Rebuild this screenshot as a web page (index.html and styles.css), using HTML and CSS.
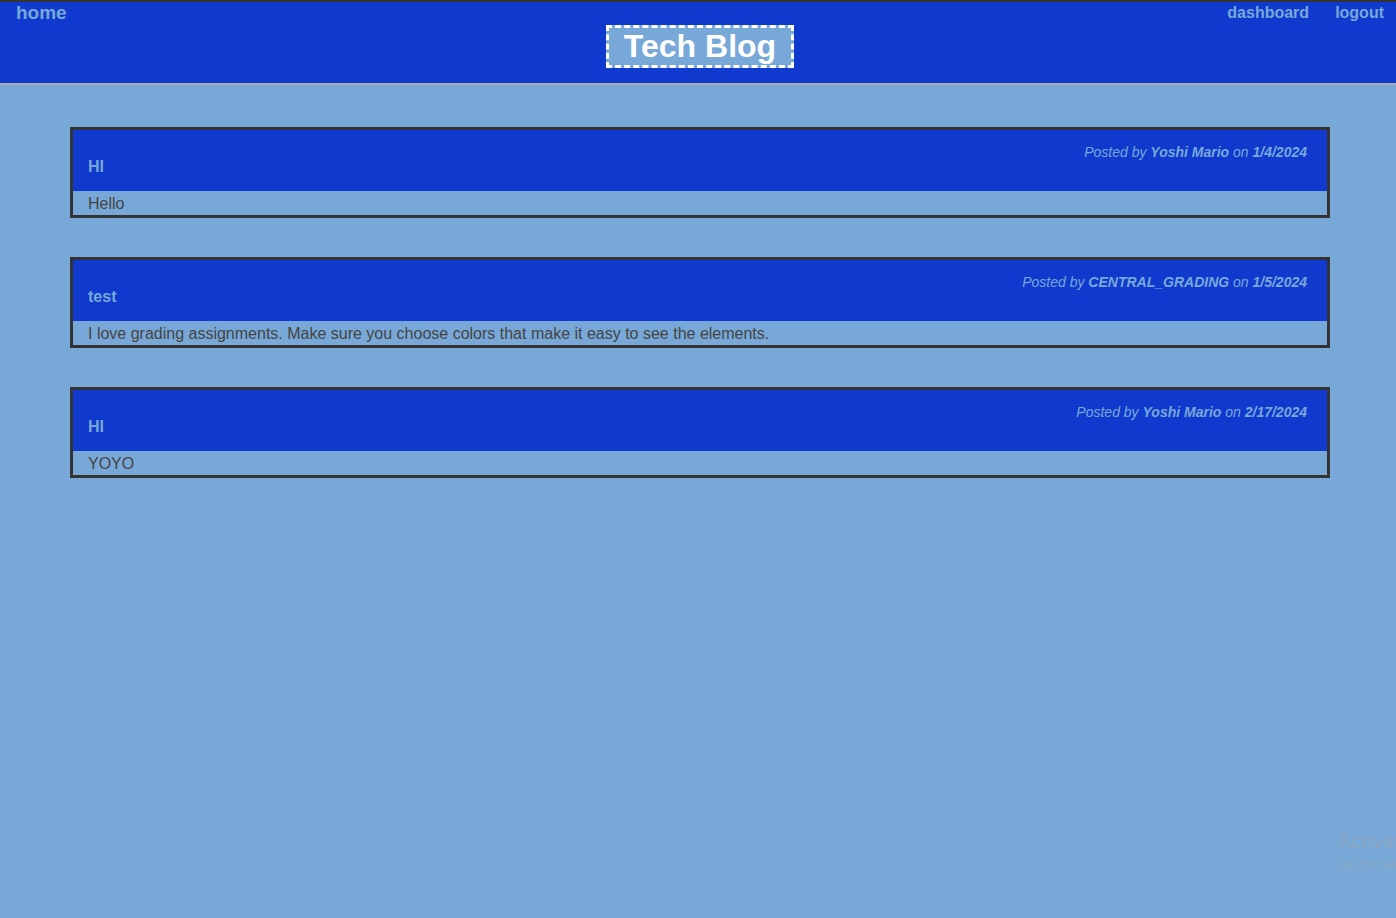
FILE: index.html
```html
<!DOCTYPE html>
<html lang="en">
<head>
<meta charset="utf-8">
<title>Tech Blog</title>
<link rel="stylesheet" href="styles.css">
</head>
<body>
<header class="site-header">
  <nav class="nav-row">
    <a class="nav-link nav-home" href="#">home</a>
    <div class="nav-right">
      <a class="nav-link" href="#">dashboard</a>
      <a class="nav-link" href="#">logout</a>
    </div>
  </nav>
  <div class="title-wrap">
    <h1 class="site-title">Tech Blog</h1>
  </div>
</header>
<main class="posts">
  <article class="post">
    <div class="post-head">
      <p class="post-meta">Posted by <b>Yoshi Mario</b> on <b>1/4/2024</b></p>
      <h2 class="post-title">HI</h2>
    </div>
    <p class="post-body">Hello</p>
  </article>
  <article class="post">
    <div class="post-head">
      <p class="post-meta">Posted by <b>CENTRAL_GRADING</b> on <b>1/5/2024</b></p>
      <h2 class="post-title">test</h2>
    </div>
    <p class="post-body">I love grading assignments. Make sure you choose colors that make it easy to see the elements.</p>
  </article>
  <article class="post">
    <div class="post-head">
      <p class="post-meta">Posted by <b>Yoshi Mario</b> on <b>2/17/2024</b></p>
      <h2 class="post-title">HI</h2>
    </div>
    <p class="post-body">YOYO</p>
  </article>
</main>
<div class="watermark">
  <div class="wm-title">Activate Windows</div>
  <div class="wm-sub">Go to Settings to activate Windows.</div>
</div>
</body>
</html>
```

FILE: styles.css
```css
html, body {
  margin: 0;
  padding: 0;
}
body {
  background: #78a8d8;
  font-family: "Liberation Sans", Arial, sans-serif;
  color: #444;
  min-height: 918px;
  overflow: hidden;
}
.site-header {
  background: #103acd;
  border-top: 2px solid #333;
  border-bottom: 2px solid #aaa;
  padding: 0 12px 15px 16px;
}
.nav-row {
  display: flex;
  justify-content: space-between;
  height: 21px;
  align-items: center;
}
.nav-right {
  display: flex;
  gap: 26px;
}
.nav-link {
  color: #78a8d8;
  text-decoration: none;
  font-weight: bold;
  font-size: 16px;
  line-height: 20px;
}
.nav-home {
  font-size: 19px;
}
.title-wrap {
  display: flex;
  justify-content: center;
  margin-top: 2px;
}
.site-title {
  margin: 0;
  background: #78a8d8;
  color: #fff;
  border: 3px dashed #fff;
  font-size: 32px;
  line-height: 37px;
  padding: 0 15px;
  font-weight: bold;
}
.posts {
  padding: 42px 66px 0 70px;
  display: flex;
  flex-direction: column;
  gap: 39px;
}
.post {
  border: 3px solid #333;
}
.post-head {
  background: #103acd;
  padding: 15px 20px 16px 15px;
}
.post-meta {
  margin: 0;
  text-align: right;
  font-style: italic;
  font-size: 14px;
  line-height: 14px;
  color: #78a8d8;
}
.post-title {
  margin: 0;
  font-size: 16px;
  line-height: 16px;
  color: #78a8d8;
  font-weight: bold;
}
.post-body {
  margin: 0;
  padding: 1px 15px 0;
  font-size: 16px;
  line-height: 23px;
  color: #444;
}
.watermark {
  position: fixed;
  left: 1338px;
  top: 828px;
  white-space: nowrap;
  color: #8ea7c2;
  font-family: "Open Sans", "Noto Sans", sans-serif;
}
.wm-title {
  font-size: 20px;
  line-height: 26px;
}
.wm-sub {
  font-size: 15px;
  line-height: 20px;
}
```
